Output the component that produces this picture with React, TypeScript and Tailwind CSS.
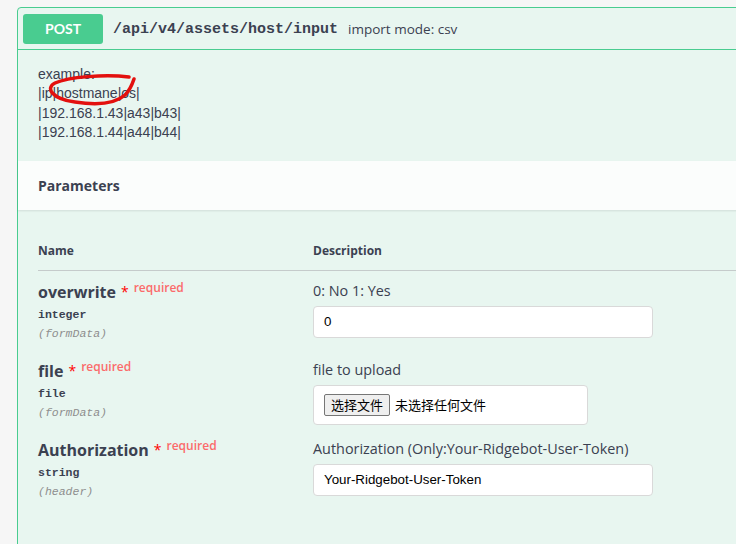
const params = [
  {
    name: 'overwrite',
    type: 'integer',
    where: '(formData)',
    desc: '0: No 1: Yes',
    kind: 'text',
    value: '0',
  },
  {
    name: 'file',
    type: 'file',
    where: '(formData)',
    desc: 'file to upload',
    kind: 'file',
    value: '',
  },
  {
    name: 'Authorization',
    type: 'string',
    where: '(header)',
    desc: 'Authorization (Only:Your-Ridgebot-User-Token)',
    kind: 'text',
    value: 'Your-Ridgebot-User-Token',
  },
];

const sans = "font-['Open_Sans','Noto_Sans_CJK_SC',sans-serif]";
const mono = "font-['Liberation_Mono',monospace]";

function ParamInput({ kind, value }: { kind: string; value: string }) {
  if (kind === 'file') {
    return (
      <div className="flex h-[40px] w-[275px] items-center gap-[5px] rounded-[4px] border border-[#d9d9d9] bg-white px-[10px] font-['Noto_Sans_CJK_SC',sans-serif] text-[13px] text-black">
        <span className="rounded-[2px] border border-[#767676] bg-[#efefef] px-[6px] leading-[20px]">
          选择文件
        </span>
        <span>未选择任何文件</span>
      </div>
    );
  }
  return (
    <div className="flex h-[32px] w-[340px] items-center rounded-[4px] border border-[#d9d9d9] bg-white px-[10px] font-['Liberation_Sans',sans-serif] text-[13.33px] text-black">
      {value}
    </div>
  );
}

export default function App() {
  return (
    <div className="h-[544px] w-[736px] overflow-hidden bg-[#f6f6f6] pl-[17px] pt-[7px]">
      <div className="w-[760px] rounded-t-[4px] border border-[#49cc90] bg-[#e8f6f0] text-[#3b4151]">
        {/* summary */}
        <div className="flex h-[42px] items-center border-b border-[#49cc90] px-[5px]">
          <div className="flex h-[30px] w-[80px] items-center justify-center rounded-[3px] bg-[#49cc90] font-['Lato',sans-serif] text-[14px] font-bold text-white">
            POST
          </div>
          <span className={`${mono} ml-[10px] mt-[4px] text-[15px] font-bold`}>/api/v4/assets/host/input</span>
          <span className={`${sans} ml-[10px] mt-[2px] text-[13.5px]`}>import mode: csv</span>
        </div>

        {/* description */}
        <div className="relative px-[20px] pb-[19px] pt-[15px] font-['Liberation_Sans',sans-serif] text-[14px] leading-[19.3px]">
          <div>example:</div>
          <div>|ip|hostmane|os|</div>
          <div>|192.168.1.43|a43|b43|</div>
          <div>|192.168.1.44|a44|b44|</div>
          {/* red marker circle drawn over the text */}
          <svg className="absolute left-[22px] top-[24px]" width="100" height="34" viewBox="0 0 100 34" fill="none">
            <path
              d="M89 3 C65 0, 28 3, 15 9 C5 14, 12 25, 35 28 C55 31, 75 30, 85 21 C90 16, 92 11, 94 5"
              stroke="#e3100e"
              strokeWidth="3.5"
              strokeLinecap="round"
            />
          </svg>
        </div>

        {/* parameters header */}
        <div className={`${sans} flex h-[49px] items-center bg-[#fbfdfc] px-[20px] text-[14px] font-bold shadow-[0_1px_2px_rgba(0,0,0,0.1)]`}>
          Parameters
        </div>

        {/* table */}
        <div className={`${sans} px-[20px] pt-[21px]`}>
          <div className="flex border-b border-[#c5cbcb] pb-[11px] pt-[12px] text-[12px] font-bold leading-[16px]">
            <div className="w-[275px]">Name</div>
            <div>Description</div>
          </div>
          {params.map((p) => (
            <div key={p.name} className="flex h-[79px] pt-[10px]">
              <div className="w-[275px]">
                <div className="flex items-start">
                  <span className="text-[16px] font-bold leading-[22px]">{p.name}</span>
                  <span className="ml-[5px] mt-[3px] text-[14px] leading-[16px] text-[#ff0000]">*</span>
                  <span className="ml-[5px] mt-[-1px] text-[12px] font-semibold leading-[16px] text-[#fb6b6b]">
                    required
                  </span>
                </div>
                <div className={`${mono} mt-[3px] text-[11.5px] font-bold leading-[18px]`}>{p.type}</div>
                <div className={`${mono} text-[11.5px] italic leading-[19px] text-[#8e8e8e]`}>{p.where}</div>
              </div>
              <div>
                <div className="text-[14.4px] leading-[20px]">{p.desc}</div>
                <div className="mt-[5px]">
                  <ParamInput kind={p.kind} value={p.value} />
                </div>
              </div>
            </div>
          ))}
          <div className="h-[60px]" />
        </div>
      </div>
    </div>
  );
}
